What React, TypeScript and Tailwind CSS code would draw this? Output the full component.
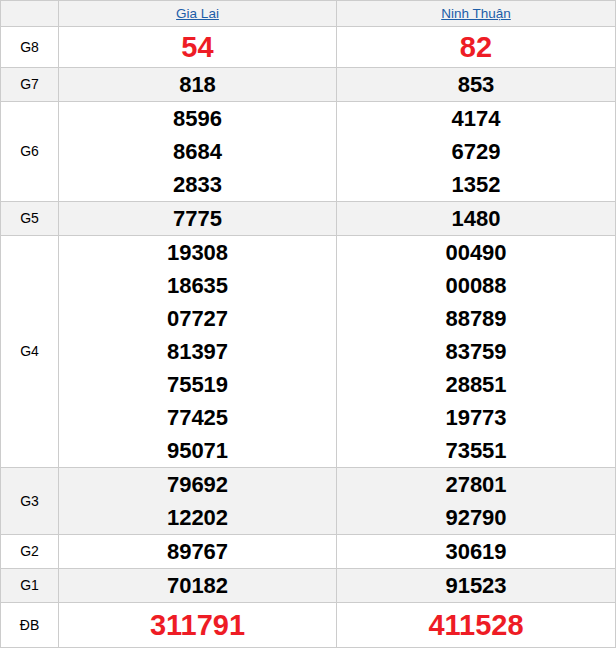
import React from "react";

type Row = { label: string; a: string[]; b: string[]; h: number; red?: boolean; big?: number; gray: boolean };

const rows: Row[] = [
  { label: "G8", a: ["54"], b: ["82"], h: 40, red: true, gray: false },
  { label: "G7", a: ["818"], b: ["853"], h: 33, gray: true },
  { label: "G6", a: ["8596", "8684", "2833"], b: ["4174", "6729", "1352"], h: 99, gray: false },
  { label: "G5", a: ["7775"], b: ["1480"], h: 33, gray: true },
  {
    label: "G4",
    a: ["19308", "18635", "07727", "81397", "75519", "77425", "95071"],
    b: ["00490", "00088", "88789", "83759", "28851", "19773", "73551"],
    h: 231,
    gray: false,
  },
  { label: "G3", a: ["79692", "12202"], b: ["27801", "92790"], h: 66, gray: true },
  { label: "G2", a: ["89767"], b: ["30619"], h: 33, gray: false },
  { label: "G1", a: ["70182"], b: ["91523"], h: 32, gray: true },
  { label: "ĐB", a: ["311791"], b: ["411528"], h: 44, red: true, gray: false },
];

function Cell({ nums, red }: { nums: string[]; red?: boolean }) {
  return (
    <td className="border border-[#cccccc] p-0 text-center align-middle">
      <div className="flex flex-col items-center justify-center">
        {nums.map((n, i) =>
          red ? (
            <div key={i} className="text-[29px] leading-[40px] font-bold text-[#ee1c25]">
              {n}
            </div>
          ) : (
            <div key={i} className="text-[22px] leading-[33px] font-bold text-black">
              {n}
            </div>
          )
        )}
      </div>
    </td>
  );
}

export default function App() {
  return (
    <div className="w-[616px] h-[648px] bg-white" style={{ fontFamily: '"Liberation Sans", Arial, sans-serif' }}>
      <table className="border-collapse w-[615px] table-fixed">
        <colgroup>
          <col className="w-[58px]" />
          <col className="w-[278px]" />
          <col className="w-[279px]" />
        </colgroup>
        <tbody>
          <tr className="bg-[#f2f2f2] h-[26px]">
            <td className="border border-[#cccccc] p-0"></td>
            <td className="border border-[#cccccc] p-0 text-center text-[13.5px] leading-[25px]">
              <a className="underline text-[#1d5ea8]">Gia Lai</a>
            </td>
            <td className="border border-[#cccccc] p-0 text-center text-[13.5px] leading-[25px]">
              <a className="underline text-[#1d5ea8]">Ninh Thuận</a>
            </td>
          </tr>
          {rows.map((r) => (
            <tr key={r.label} className={r.gray ? "bg-[#f2f2f2]" : "bg-white"} style={{ height: r.h + 1 }}>
              <td className="border border-[#cccccc] p-0 text-center text-[14px] text-black align-middle">{r.label}</td>
              <Cell nums={r.a} red={r.red} />
              <Cell nums={r.b} red={r.red} />
            </tr>
          ))}
        </tbody>
      </table>
    </div>
  );
}
